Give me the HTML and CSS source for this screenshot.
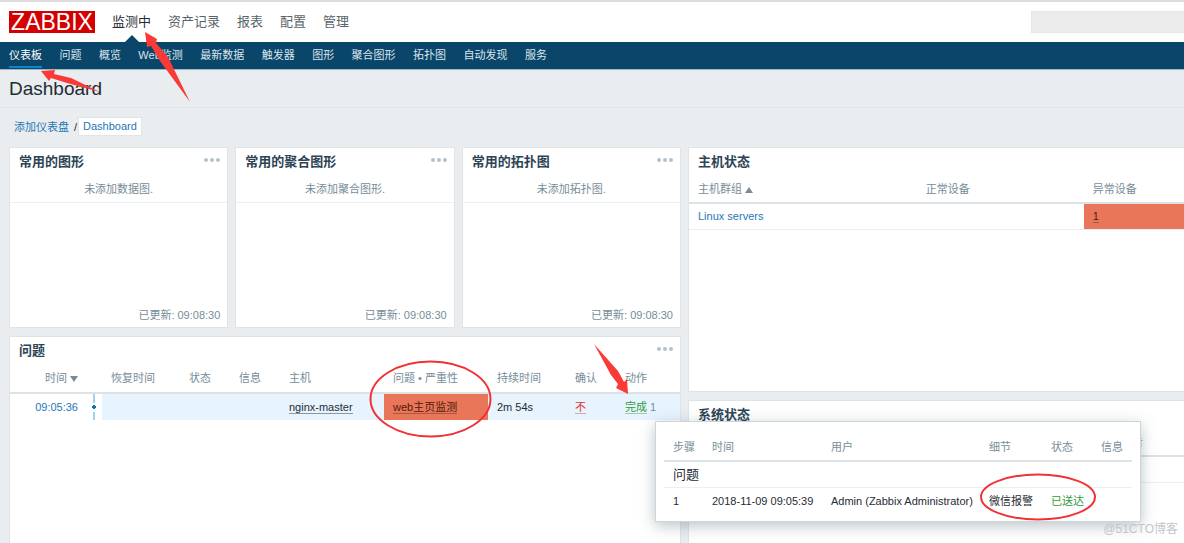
FILE: index.html
```html
<!DOCTYPE html>
<html lang="zh-CN">
<head>
<meta charset="utf-8">
<title>Dashboard</title>
<link rel="stylesheet" href="styles.css">
</head>
<body>
<header class="top">
  <a class="logo" href="#">ZABBIX</a>
  <nav class="menu">
    <a class="menu-item selected" href="#">监测中</a>
    <a class="menu-item" href="#">资产记录</a>
    <a class="menu-item" href="#">报表</a>
    <a class="menu-item" href="#">配置</a>
    <a class="menu-item" href="#">管理</a>
  </nav>
  <input class="search" type="text" aria-label="搜索">
</header>
<nav class="subnav">
  <div class="subnav-list">
    <a class="subnav-item selected" href="#">仪表板</a>
    <a class="subnav-item" href="#">问题</a>
    <a class="subnav-item" href="#">概览</a>
    <a class="subnav-item" href="#">Web监测</a>
    <a class="subnav-item" href="#">最新数据</a>
    <a class="subnav-item" href="#">触发器</a>
    <a class="subnav-item" href="#">图形</a>
    <a class="subnav-item" href="#">聚合图形</a>
    <a class="subnav-item" href="#">拓扑图</a>
    <a class="subnav-item" href="#">自动发现</a>
    <a class="subnav-item" href="#">服务</a>
  </div>
</nav>
<div class="title-bar"><h1>Dashboard</h1></div>
<nav class="crumbs">
  <a href="#">添加仪表盘</a><span>/</span><a class="current" href="#">Dashboard</a>
</nav>
<main class="board">
  <div class="column">
    <div class="favourites">
      <section class="widget small">
        <div class="widget-head"><h2>常用的图形</h2><button class="more" aria-label="更多"><i></i><i></i><i></i></button></div>
        <p class="empty">未添加数据图.</p>
        <p class="updated">已更新: 09:08:30</p>
      </section>
      <section class="widget small">
        <div class="widget-head"><h2>常用的聚合图形</h2><button class="more" aria-label="更多"><i></i><i></i><i></i></button></div>
        <p class="empty">未添加聚合图形.</p>
        <p class="updated">已更新: 09:08:30</p>
      </section>
      <section class="widget small">
        <div class="widget-head"><h2>常用的拓扑图</h2><button class="more" aria-label="更多"><i></i><i></i><i></i></button></div>
        <p class="empty">未添加拓扑图.</p>
        <p class="updated">已更新: 09:08:30</p>
      </section>
    </div>
    <section class="widget rest">
      <div class="widget-head"><h2>问题</h2><button class="more" aria-label="更多"><i></i><i></i><i></i></button></div>
      <table class="problems">
        <colgroup><col class="c-time"><col class="c-line"><col class="c-recovery"><col class="c-short"><col class="c-short"><col class="c-wide"><col class="c-wide"><col class="c-recovery"><col class="c-short"><col></colgroup>
        <thead><tr><th class="right">时间<span class="sort down"></span></th><th></th><th>恢复时间</th><th>状态</th><th>信息</th><th>主机</th><th>问题 • 严重性</th><th>持续时间</th><th>确认</th><th>动作</th></tr></thead>
        <tbody><tr>
          <td class="right plain"><a href="#">09:05:36</a></td>
          <td class="timeline plain"></td>
          <td></td><td></td><td></td>
          <td><a class="dotted" href="#">nginx-master</a></td>
          <td class="high"><a class="dotted" href="#">web主页监测</a></td>
          <td>2m 54s</td>
          <td><a class="dotted red" href="#">不</a></td>
          <td><a class="dotted green" href="#">完成</a> <sup>1</sup></td>
        </tr></tbody>
      </table>
    </section>
  </div>
  <div class="column">
    <section class="widget edge hosts">
      <div class="widget-head"><h2>主机状态</h2></div>
      <table>
        <colgroup><col class="h-group"><col class="h-ok"><col></colgroup>
        <thead><tr><th>主机群组<span class="sort up"></span></th><th>正常设备</th><th>异常设备</th></tr></thead>
        <tbody><tr><td><a href="#">Linux servers</a></td><td></td><td class="high"><a class="dotted" href="#">1</a></td></tr></tbody>
      </table>
    </section>
    <section class="widget edge rest">
      <div class="widget-head"><h2>系统状态</h2></div>
      <table>
        <colgroup><col><col class="s-warn"></colgroup>
        <thead><tr><th></th><th>警告</th></tr></thead>
        <tbody><tr><td>&nbsp;</td><td></td></tr></tbody>
      </table>
    </section>
  </div>
</main>
<aside class="popup">
  <table>
    <colgroup><col class="p-step"><col class="p-time"><col class="p-user"><col class="p-detail"><col class="p-status"><col class="p-info"></colgroup>
    <thead><tr><th>步骤</th><th>时间</th><th>用户</th><th>细节</th><th>状态</th><th>信息</th></tr></thead>
    <tbody>
      <tr><td class="group" colspan="6">问题</td></tr>
      <tr class="last"><td>1</td><td>2018-11-09 09:05:39</td><td>Admin (Zabbix Administrator)</td><td>微信报警</td><td class="green">已送达</td><td></td></tr>
    </tbody>
  </table>
</aside>
<svg class="marks" width="1184" height="543" viewBox="0 0 1184 543" aria-hidden="true">
  <g fill="#f93a37">
    <path d="M145 32L157 39L156 43L168 57L190 102L160 61L151 46L147 47Z"/>
    <path d="M41 71L55 70L54 74L71 78L100 92L67 83L51 78L49 81Z"/>
    <path d="M628 394L616 388L618 384L611 375L594 344L618 371L624 382L627 379Z"/>
  </g>
  <g fill="none" stroke="#f03232" stroke-width="2">
    <ellipse cx="430.500" cy="399" rx="60" ry="37.500"/>
    <ellipse cx="1038" cy="497" rx="57" ry="22.500"/>
  </g>
</svg>
<div class="watermark">@51CTO博客</div>
</body>
</html>
```

FILE: styles.css
```css
* { box-sizing: border-box; }

body {
  position: relative;
  display: flex;
  flex-direction: column;
  min-height: 100vh;
  margin: 0;
  background: #e9edf0;
  color: #1f2c33;
  font: 11px/25px "Liberation Sans", "Noto Sans CJK SC", sans-serif;
  overflow-x: hidden;
}

a { color: #1f78b4; text-decoration: none; }
h1, h2, p { margin: 0; font-weight: normal; }

.top {
  display: flex;
  align-items: center;
  height: 42px;
  padding-left: 9px;
  border-top: 2px solid #dcdcdc;
  background: #fff;
}

.logo {
  width: 86px;
  background: #d40000;
  color: #fff;
  font-size: 23px;
  line-height: 22px;
  text-align: center;
}

.menu { display: flex; gap: 17px; margin-left: 17px; align-self: stretch; }
.menu-item { position: relative; color: #5a6468; font-size: 13px; line-height: 39px; }
.menu-item.selected { color: #1f2c33; }
.menu-item.selected::after {
  content: "";
  position: absolute;
  left: 50%;
  bottom: 0;
  margin-left: -7px;
  border: 7px solid transparent;
  border-top: 0;
  border-bottom-color: #0a466a;
}

.search {
  width: 153px;
  height: 22px;
  margin-left: auto;
  border: 1px solid #e6e6e6;
  border-right: 0;
  background: #ebebeb;
}

.subnav { height: 28px; padding-left: 9px; border-bottom: 1px solid #9db5c4; background: #0a466a; }
.subnav-list { display: flex; justify-content: space-between; max-width: 538px; }
.subnav-item { height: 26px; color: #dbe5eb; line-height: 27px; white-space: nowrap; }
.subnav-item.selected { border-bottom: 2px solid #0f84cc; color: #fff; }

.title-bar { padding: 0 9px; border-bottom: 1px solid #e1e5e8; }
h1 { font-size: 19px; line-height: 37px; }

.crumbs { display: flex; align-items: center; padding: 9px 14px 0; line-height: 18px; }
.crumbs span { padding: 0 1px 0 5px; }
.crumbs .current { padding: 0 4px; border: 1px solid #e1e5e8; background: #fff; line-height: 17px; }

.board {
  display: grid;
  grid-template-columns: 672fr 496fr;
  gap: 7px;
  flex: 1;
  padding: 11px 0 0 9px;
}
.column { display: flex; flex-direction: column; gap: 8px; min-width: 0; }
.favourites { display: grid; grid-template-columns: repeat(3, 1fr); gap: 7px; }

.widget { display: flex; flex-direction: column; border: 1px solid #dfe4e7; background: #fff; }
.small { min-height: 181px; }
.hosts { min-height: 245px; }
.rest { flex: 1; border-bottom: 0; }
.edge { border-right: 0; }

.widget-head { display: flex; justify-content: space-between; padding: 0 7px 0 9px; }
h2 { color: #2c4454; font-size: 13px; font-weight: bold; line-height: 28px; }
.more {
  display: flex;
  gap: 2px;
  height: 14px;
  margin-top: 4px;
  padding: 6px 0 0;
  border: 0;
  background: none;
}
.more i { width: 4px; height: 4px; border-radius: 50%; background: #b5c2c9; }

.empty { border-bottom: 1px solid #ebeff1; color: #768d99; line-height: 26px; text-align: center; }
.updated { margin-top: auto; padding-right: 7px; color: #768d99; line-height: 24px; text-align: right; }

table { width: 100%; border-collapse: separate; border-spacing: 0; table-layout: fixed; }
th, td { height: 26px; padding: 0 0 0 9px; text-align: left; white-space: nowrap; }
th { height: 28px; border-bottom: 2px solid #dce2e5; color: #768d99; font-weight: normal; }
td { border-bottom: 1px solid #ebeff1; }
.right { padding: 0 9px 0 0; text-align: right; }

.sort { display: inline-block; margin-left: 3px; border: 4px solid transparent; }
.sort.up { border-top: 0; border-bottom: 6px solid #768d99; }
.sort.down { border-bottom: 0; border-top: 6px solid #768d99; }

.c-time { width: 77px; }
.c-line { width: 15px; }
.c-recovery { width: 78px; }
.c-short { width: 50px; }
.c-wide { width: 104px; }
.problems th { height: 29px; }
.problems td { border-bottom: 0; background: #e7f4fe; }
.problems td.plain { background: #fff; }
.problems td.timeline {
  background:
    radial-gradient(circle at 7px 13px, #0275b8 2px, transparent 2px),
    linear-gradient(#fff, #fff) 0 9px / 15px 9px no-repeat,
    linear-gradient(#a3d2f0, #a3d2f0) 6px 0 / 2px 100% no-repeat,
    #fff;
}

td.high, .problems td.high { background: #e97659; }
.dotted { border-bottom: 1px solid #8a979f; color: #1f2c33; }
.high .dotted { border-color: #a85842; color: #52190b; }
.dotted.red { border-color: #dca6a0; color: #e33734; }
.dotted.green { border-color: #9bcfa1; color: #329a3e; }
.green { color: #329a3e; }
sup { color: #768d99; font-size: 11px; line-height: 11px; vertical-align: baseline; }

.h-group { width: 46%; }
.h-ok { width: 167px; }
.s-warn { width: 72px; }

.popup {
  position: absolute;
  left: 655px;
  top: 421px;
  width: 486px;
  padding: 12px 8px 7px;
  border: 1px solid #ccd5d9;
  background: #fff;
  box-shadow: 0 4px 14px rgba(60, 85, 95, 0.35);
}
.popup .group { font-size: 13px; }
.popup .last td { border-bottom: 0; }
.p-step { width: 39px; }
.p-time { width: 119px; }
.p-user { width: 158px; }
.p-detail { width: 62px; }
.p-status { width: 50px; }
.p-info { width: 40px; }

.marks { position: absolute; left: 0; top: 0; pointer-events: none; }
.watermark { position: absolute; right: 6px; bottom: 1px; color: #c4c6c8; font-size: 12px; }
```
